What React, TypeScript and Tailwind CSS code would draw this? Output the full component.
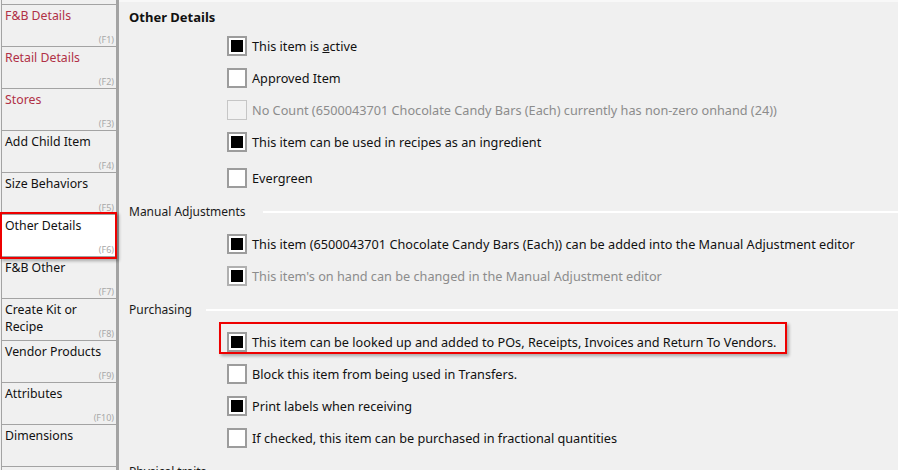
import React from 'react';

type NavItem = { label: React.ReactNode; key?: string; accent?: boolean; selected?: boolean };

const navItems: NavItem[] = [
    { label: 'F&B Details', key: '(F1)', accent: true },
    { label: 'Retail Details', key: '(F2)', accent: true },
    { label: 'Stores', key: '(F3)', accent: true },
    { label: 'Add Child Item', key: '(F4)' },
    { label: 'Size Behaviors', key: '(F5)' },
    { label: 'Other Details', key: '(F6)', selected: true },
    { label: 'F&B Other', key: '(F7)' },
    { label: <>Create Kit or<br />Recipe</>, key: '(F8)' },
    { label: 'Vendor Products', key: '(F9)' },
    { label: 'Attributes', key: '(F10)' },
    { label: 'Dimensions' },
    { label: 'Barcodes' },
];

function Checkbox({ checked, disabled }: { checked?: boolean; disabled?: boolean }) {
    if (disabled && !checked) {
        return <span className="w-[20px] h-[20px] shrink-0 border border-[#c6c6c6] bg-[#f2f2f2]" />;
    }
    return (
        <span
            className={`w-[20px] h-[20px] shrink-0 border-2 ${disabled ? 'border-[#b0b0b0]' : 'border-[#9c9c9c]'} bg-white flex items-center justify-center`}
        >
            {checked && <span className="w-[12px] h-[12px] bg-black" />}
        </span>
    );
}

function CheckRow({
    children,
    checked,
    disabled,
    highlight,
    className = '',
}: {
    children: React.ReactNode;
    checked?: boolean;
    disabled?: boolean;
    highlight?: boolean;
    className?: string;
}) {
    return (
        <div className={`relative ml-[98px] h-[32px] w-fit flex items-center gap-[5px] ${className}`}>
            <Checkbox checked={checked} disabled={disabled} />
            <span className={`whitespace-nowrap text-[12.7px] ${disabled ? 'text-[#8c8c8c]' : 'text-[#111]'}`}>{children}</span>
            {highlight && (
                <span className="absolute left-[-8px] right-[-11px] top-[-4px] bottom-[4px] border-2 border-[#ee0000] shadow-[2px_2px_3px_rgba(0,0,0,0.3)] pointer-events-none" />
            )}
        </div>
    );
}

function SectionHeading({ title, gap }: { title: string; gap: string }) {
    return (
        <div className="h-[20px] mt-[8px] flex items-center text-[#1a1a1a]">
            <span className="whitespace-nowrap">{title}</span>
            <span className={`flex-1 h-[2px] bg-white ${gap}`} />
        </div>
    );
}

export default function App() {
    return (
        <div className="w-[898px] h-[470px] overflow-hidden flex bg-[#f0f0f0] text-[12px] leading-[16px] font-['Segoe_UI','Noto_Sans',sans-serif]">
            <aside className="w-[119px] shrink-0 pl-px">
                <div className="h-full border-l border-r-[3px] border-[#a3a3a3] pt-[4px]">
                    {navItems.map((item, i) => (
                        <div
                            key={i}
                            className={`relative h-[42px] border-t border-[#a3a3a3] pl-[3px] pt-[2px] text-[12.3px] ${item.selected ? 'bg-white' : ''} ${item.accent ? 'text-[#b03046]' : 'text-[#111]'}`}
                        >
                            <span className="leading-[17px] block">{item.label}</span>
                            {item.key && (
                                <span className="absolute right-[2px] bottom-[1px] text-[9px] leading-[11px] text-[#a8a8a8]">
                                    {item.key}
                                </span>
                            )}
                            {item.selected && (
                                <span className="absolute left-[-2px] right-[-1px] top-[-3px] bottom-[-3px] border-2 border-[#ee0000] shadow-[2px_2px_3px_rgba(0,0,0,0.3)] z-10 pointer-events-none" />
                            )}
                        </div>
                    ))}
                </div>
            </aside>

            <main className="flex-1 pl-[10px] border-t-2 border-[#f8f8f8]">
                <h2 className="pt-[5px] h-[26px] font-bold text-[13px] leading-[20px] text-[#111]">Other Details</h2>
                <CheckRow checked className="mt-[2px]">
                    This item is <span className="underline">a</span>ctive
                </CheckRow>
                <CheckRow>Approved Item</CheckRow>
                <CheckRow disabled>
                    No Count (6500043701 Chocolate Candy Bars (Each) currently has non-zero onhand (24))
                </CheckRow>
                <CheckRow checked>This item can be used in recipes as an ingredient</CheckRow>
                <CheckRow className="mt-[4px]">Evergreen</CheckRow>

                <SectionHeading title="Manual Adjustments" gap="ml-[17px]" />
                <CheckRow checked className="mt-[6px]">
                    This item (6500043701 Chocolate Candy Bars (Each)) can be added into the Manual Adjustment editor
                </CheckRow>
                <CheckRow checked disabled>
                    This item's on hand can be changed in the Manual Adjustment editor
                </CheckRow>

                <SectionHeading title="Purchasing" gap="ml-[14px]" />
                <CheckRow checked highlight className="mt-[6px]">
                    This item can be looked up and added to POs, Receipts, Invoices and Return To Vendors.
                </CheckRow>
                <CheckRow>Block this item from being used in Transfers.</CheckRow>
                <CheckRow checked>Print labels when receiving</CheckRow>
                <CheckRow>If checked, this item can be purchased in fractional quantities</CheckRow>

                <SectionHeading title="Physical traits" gap="ml-[14px]" />
            </main>
        </div>
    );
}
